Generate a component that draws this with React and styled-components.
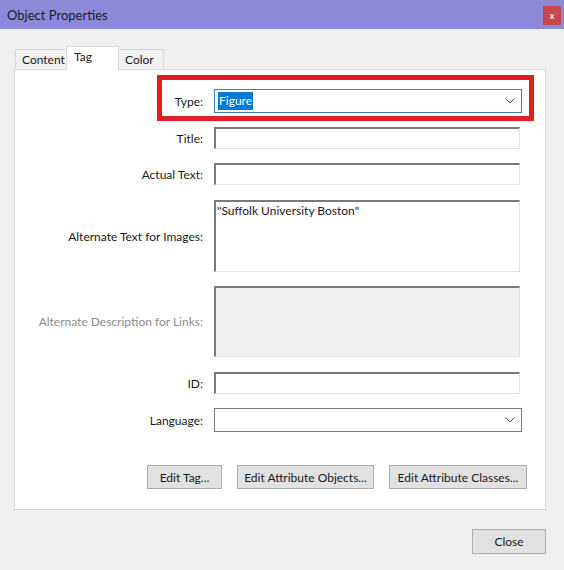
import React from 'react'
import styled, { createGlobalStyle } from 'styled-components'

const GlobalStyle = createGlobalStyle`
  html, body {
    margin: 0;
    padding: 0;
    background: #f0f0f0;
  }
  body {
    font-family: Lato, "Open Sans", sans-serif;
  }
`

const Window = styled.div`
  width: 564px;
  height: 570px;
  display: flex;
  flex-direction: column;
  background: #f0f0f0;
  overflow: hidden;
`

const TitleBar = styled.div`
  height: 29px;
  display: flex;
  align-items: center;
  justify-content: space-between;
  padding: 0 3px 0 7px;
  background: #8b89d8;
  color: #1c1c2c;
  font-size: 13px;
  box-sizing: border-box;
`

const CloseX = styled.div`
  width: 18px;
  height: 19px;
  margin-top: 2px;
  display: flex;
  align-items: center;
  justify-content: center;
  background: #c9464d;
  color: #fff;
  font-size: 9px;
  font-weight: bold;
`

const Body = styled.div`
  flex: 1;
  display: flex;
  flex-direction: column;
  padding: 18px 18px 0 14px;
`

const Tabs = styled.div`
  display: flex;
  align-items: flex-end;
  height: 23px;
  padding-left: 1px;
  margin-bottom: -1px;
  position: relative;
  z-index: 1;
`

const Tab = styled.div`
  box-sizing: border-box;
  width: ${p => p.$w}px;
  height: ${p => (p.$active ? 24 : 21)}px;
  padding: ${p => (p.$active ? '2px 0 0 7px' : '2px 0 0 6px')};
  font-size: 12px;
  color: #1a1a1a;
  background: ${p => (p.$active ? '#fff' : '#f0f0f0')};
  border: 1px solid #d9d9d9;
  border-bottom: ${p => (p.$active ? '1px solid #fff' : '1px solid #d9d9d9')};
  margin-right: -1px;
`

const Panel = styled.div`
  box-sizing: border-box;
  width: 532px;
  height: 441px;
  background: #fff;
  border: 1px solid #d9d9d9;
  padding: 19px 0 0 0;
  display: flex;
  flex-direction: column;
`

const Form = styled.div`
  display: flex;
  flex-direction: column;
`

const Row = styled.div`
  display: flex;
  align-items: center;
  position: relative;
  margin-top: ${p => p.$gap ?? 14}px;
`

const Highlight = styled(Row)`
  &::after {
    content: '';
    position: absolute;
    left: 142px;
    width: 377px;
    top: -14px;
    bottom: -8px;
    box-sizing: border-box;
    border: 5px solid #e31d26;
    pointer-events: none;
  }
`

const Label = styled.div`
  width: 188px;
  margin-right: 11px;
  text-align: right;
  font-size: 12px;
  color: ${p => (p.$muted ? '#8c8c8c' : '#1a1a1a')};
`

const Field = styled.div`
  box-sizing: border-box;
  width: 306px;
  height: ${p => p.$h || 22}px;
  background: ${p => (p.$disabled ? '#f0f0f0' : '#fff')};
  border-top: 2px solid #7a7a7a;
  border-left: 2px solid #7a7a7a;
  border-right: 1px solid #e3e3e3;
  border-bottom: 1px solid #e3e3e3;
  padding: 1px 1px;
  font-size: 12px;
  color: #1a1a1a;
`

const Select = styled.div`
  box-sizing: border-box;
  width: 308px;
  height: 24px;
  display: flex;
  align-items: center;
  justify-content: space-between;
  padding: 0 6px 0 3px;
  background: #fff;
  border: 1px solid ${p => (p.$focus ? '#3d83c0' : '#7a7a7a')};
  font-size: 12px;
`

const Selected = styled.span`
  background: #0078d7;
  color: #fff;
  padding: 1px 1px 2px;
`

const Buttons = styled.div`
  display: flex;
  justify-content: flex-end;
  gap: 15px;
  padding-right: 18px;
  margin-top: 33px;
`

const Button = styled.div`
  box-sizing: border-box;
  height: ${p => p.$h || 24}px;
  width: ${p => p.$w}px;
  display: flex;
  align-items: center;
  justify-content: center;
  background: #e1e1e1;
  border: 1px solid #adadad;
  font-size: 12px;
  color: #1a1a1a;
`

const Footer = styled.div`
  display: flex;
  justify-content: flex-end;
  margin-top: 19px;
`

const Chevron = () => (
  <svg width="10" height="6" viewBox="0 0 10 6">
    <path d="M0.5 0.5 L5 5 L9.5 0.5" fill="none" stroke="#555" strokeWidth="1" />
  </svg>
)

export default function App() {
  return (
    <Window>
      <GlobalStyle />
      <TitleBar>
        Object Properties
        <CloseX>x</CloseX>
      </TitleBar>
      <Body>
        <Tabs>
          <Tab $w={52}>Content</Tab>
          <Tab $w={53} $active>Tag</Tab>
          <Tab $w={46}>Color</Tab>
        </Tabs>
        <Panel>
          <Form>
            <Highlight $gap={0}>
              <Label>Type:</Label>
              <Select $focus>
                <Selected>Figure</Selected>
                <Chevron />
              </Select>
            </Highlight>
            <Row>
              <Label>Title:</Label>
              <Field />
            </Row>
            <Row>
              <Label>Actual Text:</Label>
              <Field />
            </Row>
            <Row $gap={15}>
              <Label>Alternate Text for Images:</Label>
              <Field $h={72}>"Suffolk University Boston"</Field>
            </Row>
            <Row>
              <Label $muted>Alternate Description for Links:</Label>
              <Field $h={71} $disabled />
            </Row>
            <Row $gap={15}>
              <Label>ID:</Label>
              <Field />
            </Row>
            <Row>
              <Label>Language:</Label>
              <Select>
                <span />
                <Chevron />
              </Select>
            </Row>
          </Form>
          <Buttons>
            <Button $w={75}>Edit Tag...</Button>
            <Button $w={137}>Edit Attribute Objects...</Button>
            <Button $w={138}>Edit Attribute Classes...</Button>
          </Buttons>
        </Panel>
        <Footer>
          <Button $w={74} $h={25}>Close</Button>
        </Footer>
      </Body>
    </Window>
  )
}
